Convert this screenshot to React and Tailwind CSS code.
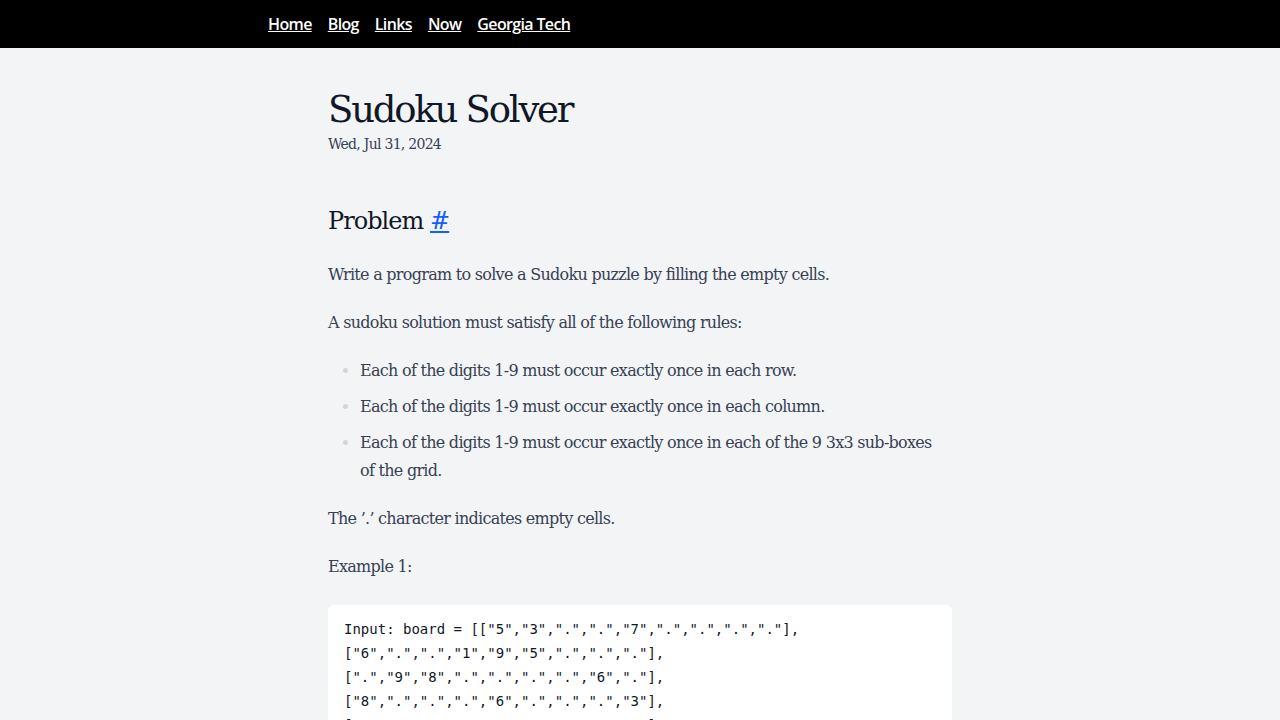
import React from "react";

const board = [
  '["5","3",".",".","7",".",".",".","."],',
  '["6",".",".","1","9","5",".",".","."],',
  '[".","9","8",".",".",".",".","6","."],',
  '["8",".",".",".","6",".",".",".","3"],',
  '["4",".",".","8",".","3",".",".","1"],',
  '["7",".",".",".","2",".",".",".","6"],',
  '[".","6",".",".",".",".","2","8","."],',
  '[".",".",".","4","1","9",".",".","5"],',
  '[".",".",".",".","8",".",".","7","9"]]',
];

const rules = [
  "Each of the digits 1-9 must occur exactly once in each row.",
  "Each of the digits 1-9 must occur exactly once in each column.",
  "Each of the digits 1-9 must occur exactly once in each of the 9 3x3 sub-boxes of the grid.",
];

const App = () => {
  return (
    <div className="min-h-screen bg-gray-100">
      {/* Top nav */}
      <nav className="bg-black h-12">
        <div className="max-w-3xl mx-auto px-3 h-full flex items-center gap-4 font-['Open_Sans',sans-serif] text-[16px] tracking-[-0.04em] font-semibold text-white">
          <a href="#" className="underline">Home</a>
          <a href="#" className="underline">Blog</a>
          <a href="#" className="underline">Links</a>
          <a href="#" className="underline">Now</a>
          <a href="#" className="underline">Georgia Tech</a>
        </div>
      </nav>

      {/* Article */}
      <main className="max-w-2xl mx-auto px-6 pt-[40px] font-['DejaVu_Serif',serif] text-gray-700 tracking-[-0.045em]">
        <h1 className="text-[37px] leading-[44px] tracking-[-0.06em] text-gray-900">Sudoku Solver</h1>
        <p className="text-sm leading-5 text-gray-700 mt-[2px]">Wed, Jul 31, 2024</p>

        <h2 className="mt-[51px] text-[24px] leading-8 tracking-[-0.04em] text-gray-900">
          Problem <a href="#" className="text-blue-600 underline">#</a>
        </h2>

        <p className="mt-6 text-base leading-7">
          Write a program to solve a Sudoku puzzle by filling the empty cells.
        </p>
        <p className="mt-5 text-base leading-7">
          A sudoku solution must satisfy all of the following rules:
        </p>

        <ul className="mt-5 pl-8 pr-3 list-disc marker:text-gray-300">
          {rules.map((r, i) => (
            <li key={i} className={`text-base leading-7 ${i > 0 ? "mt-2" : ""}`}>
              {r}
            </li>
          ))}
        </ul>

        <p className="mt-5 text-base leading-7">The ’.’ character indicates empty cells.</p>
        <p className="mt-5 text-base leading-7">Example 1:</p>

        <pre className="mt-6 bg-white rounded-md px-4 pt-3 pb-4 font-['DejaVu_Sans_Mono',monospace] text-sm leading-6 tracking-normal text-gray-900 whitespace-pre-wrap">
          {"Input: board = [" + board.join("\n")}
        </pre>
      </main>
    </div>
  );
};

export default App;
